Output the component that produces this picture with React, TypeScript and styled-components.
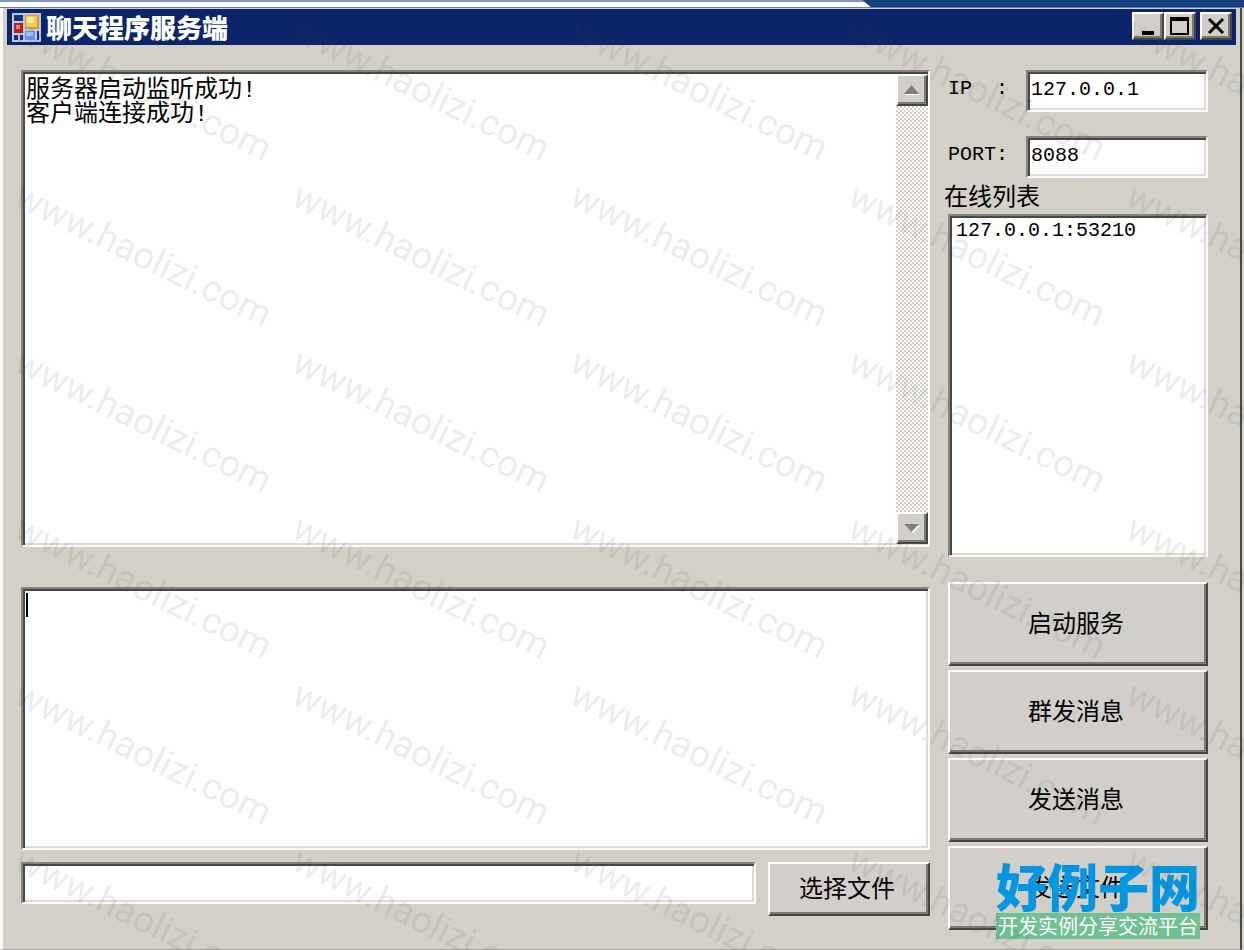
import React from "react";
import styled, { createGlobalStyle, css } from "styled-components";

const face = "#d4d0c8";
const songti = `"Liberation Mono", "Noto Sans CJK SC", monospace`;

const GlobalStyle = createGlobalStyle`
  * { box-sizing: border-box; }
  body { margin: 0; background: ${face}; }
  button, input, textarea { font: inherit; color: inherit; border-radius: 0; outline: none; }
`;

const sunken = css`
  border: 2px solid;
  border-color: #858481 #fbfaf7 #fbfaf7 #858481;
  box-shadow: inset 2px 2px 0 #454748, inset -2px -2px 0 #dedbd3;
  background: #fff;
`;

const raised = css`
  border: 2px solid;
  border-color: #fdfdfc #454545 #454545 #fdfdfc;
  box-shadow: inset -2px -2px 0 #7c7a77;
  background: #d2cfca;
`;

const Desktop = styled.div`
  position: relative;
  min-height: 100vh;
  overflow: hidden;
  display: flex;
  flex-direction: column;
  font: 24px/24px ${songti};
  color: #000;
`;

const BackStrip = styled.div`
  display: flex;
  height: 8px;
  background: #14407f;
  border-bottom: 1px solid #5f7fa8;
`;

const BackTab = styled.div`
  width: 70%;
  border-top: 2px solid #8297ae;
  background: #fbfaf6;
  clip-path: polygon(0 0, 99% 0, 100% 100%, 0 100%);
`;

const Frame = styled.main`
  flex: 1;
  display: flex;
  flex-direction: column;
  margin-right: 2px;
  padding: 1px 4px 0;
  border-left: 3px solid #fbfaf6;
  border-right: 2px solid #45484c;
  border-bottom: 1px solid #a5a29d;
  background: ${face};
`;

const TitleBar = styled.header`
  display: flex;
  align-items: center;
  height: 36px;
  padding: 0 4px 0 5px;
  background: #0c246a;
  color: #fff;
`;

const Title = styled.h1`
  flex: 1;
  margin: 0 0 0 5px;
  font: 900 26px/36px "Noto Sans CJK SC", sans-serif;
`;

const WindowButtons = styled.div`
  display: flex;
  align-self: flex-start;
  padding-top: 3px;
`;

const WindowButton = styled.button<{ $apart?: boolean }>`
  ${raised}
  display: grid;
  place-items: center;
  width: 32px;
  height: 28px;
  padding: 0;
  margin-left: ${(p) => (p.$apart ? 4 : 0)}px;
`;

const Content = styled.form`
  flex: 1;
  display: grid;
  grid-template-columns: minmax(0, 1fr) 260px;
  column-gap: 18px;
  padding: 25px 28px 18px 14px;
`;

const Column = styled.div`
  display: flex;
  flex-direction: column;
`;

const LogBox = styled.div`
  ${sunken}
  display: flex;
  height: 477px;
  margin-bottom: 40px;
  padding: 2px 0 1px 2px;
`;

const LogText = styled.textarea`
  flex: 1;
  min-width: 0;
  resize: none;
  border: 0;
  padding: 5px 1px;
  background: transparent;
  overflow: hidden;
`;

const ScrollBar = styled.div`
  display: flex;
  flex-direction: column;
  justify-content: space-between;
  width: 32px;
  background: repeating-conic-gradient(#fff 0 25%, #d4d0c8 0 50%) 0 0 / 4px 4px;
`;

const ScrollButton = styled.button`
  ${raised}
  display: grid;
  place-items: center;
  width: 32px;
  height: 32px;
  padding: 0;
`;

const MessageBox = styled.textarea`
  ${sunken}
  height: 263px;
  resize: none;
  padding: 4px;
  margin-bottom: 12px;
  caret-color: transparent;
  background: linear-gradient(#000, #000) 3px 4px / 2px 24px no-repeat #fff;
`;

const FileRow = styled.div`
  display: flex;
  align-items: flex-start;
  gap: 12px;
`;

const TextField = styled.input`
  ${sunken}
  flex: 1;
  min-width: 0;
  height: 42px;
  padding: 0 3px 4px;
  font-size: 20px;
`;

const PushButton = styled.button<{ $compact?: boolean }>`
  ${raised}
  width: ${(p) => (p.$compact ? "162px" : "100%")};
  height: ${(p) => (p.$compact ? 54 : 84)}px;
  padding: 4px 4px 0 0;
`;

const Field = styled.label`
  display: flex;
  margin-bottom: 24px;
  font-size: 20px;
  line-height: 38px;
`;

const FieldName = styled.span`
  width: 78px;
  white-space: pre;
`;

const ListLabel = styled.label`
  margin: -15px 0 3px -4px;
`;

const OnlineList = styled.select`
  ${sunken}
  width: 100%;
  height: 343px;
  margin-bottom: 25px;
  padding: 3px 6px;
  border-radius: 0;
  overflow: hidden;
  font: 20px/24px ${songti};
  color: #000;
  outline: none;
  option { padding: 0; min-height: 24px; }
`;

const Actions = styled.div`
  display: grid;
  gap: 4px;
`;

const WatermarkLayer = styled.div`
  position: absolute;
  inset: 0;
  overflow: hidden;
  pointer-events: none;
  display: grid;
  grid-template-columns: repeat(5, 278px);
  grid-auto-rows: 166px;
  padding: 12px 0 0 17px;
`;

const Watermark = styled.span`
  font: 400 37px/32px Roboto, sans-serif;
  white-space: nowrap;
  color: rgba(60, 60, 60, 0.1);
  transform: rotate(26deg);
  transform-origin: 0 16px;
`;

const SiteBadge = styled.div`
  position: absolute;
  right: 44px;
  bottom: 11px;
  display: flex;
  flex-direction: column;
  align-items: center;
`;

const SiteName = styled.strong`
  font: 900 51px/56px "Noto Sans CJK SC", sans-serif;
  color: #0596e2;
`;

const SiteSlogan = styled.span`
  padding: 0 2px;
  background: #6fc092;
  color: #fff;
  font: 20px/26px "Noto Sans CJK SC", sans-serif;
`;

const AppIcon = () => (
  <svg width="29" height="29" viewBox="0 0 29 29" aria-hidden="true">
    <rect width="29" height="29" fill="#b9c8e6" />
    <rect x="2" y="2" width="9" height="6" fill="#17337a" />
    <rect x="2" y="10" width="9" height="10" fill="#b32418" />
    <rect x="4" y="12" width="4" height="4" fill="#e88372" />
    <rect x="13" y="2" width="14" height="14" fill="#d99f22" />
    <rect x="14" y="3" width="11" height="11" fill="#f3c94f" />
    <rect x="15" y="4" width="7" height="6" fill="#fbe9a4" />
    <rect x="2" y="22" width="4" height="5" fill="#17337a" />
    <rect x="8" y="22" width="3" height="5" fill="#17337a" />
    <rect x="13" y="18" width="10" height="9" fill="#5f9be8" />
    <rect x="14" y="19" width="7" height="4" fill="#a5cbfa" />
    <rect x="25" y="18" width="2" height="9" fill="#17337a" />
  </svg>
);

const Arrow = ({ down }: { down?: boolean }) => (
  <svg width="18" height="12" viewBox="0 0 18 12" aria-hidden="true">
    <path d={down ? "M3 4h14l-7 7z" : "M2 10h15v1H3z"} fill="#fff" />
    <path d={down ? "M1 2h15L8.500 10z" : "M1 10h15L8.500 1z"} fill="#808080" />
  </svg>
);

const marks = Array.from({ length: 30 }, (_, i) => i);

export default function App() {
  return (
    <Desktop>
      <GlobalStyle />
      <BackStrip><BackTab /></BackStrip>
      <Frame>
        <TitleBar>
          <AppIcon />
          <Title>聊天程序服务端</Title>
          <WindowButtons>
            <WindowButton aria-label="最小化">
              <svg width="24" height="22"><path d="M6 16h12v4H6z" /></svg>
            </WindowButton>
            <WindowButton aria-label="最大化">
              <svg width="24" height="22"><path d="M2 2h19v18H2zM4 6v12h15V6z" fillRule="evenodd" /></svg>
            </WindowButton>
            <WindowButton $apart aria-label="关闭">
              <svg width="24" height="22"><path d="M5 4l14 14M19 4L5 18" stroke="#000" strokeWidth="3" /></svg>
            </WindowButton>
          </WindowButtons>
        </TitleBar>
        <Content onSubmit={(e) => e.preventDefault()}>
          <Column>
            <LogBox>
              <LogText aria-label="日志" readOnly defaultValue={"服务器启动监听成功!\n客户端连接成功!"} />
              <ScrollBar>
                <ScrollButton type="button" aria-label="向上"><Arrow /></ScrollButton>
                <ScrollButton type="button" aria-label="向下"><Arrow down /></ScrollButton>
              </ScrollBar>
            </LogBox>
            <MessageBox aria-label="消息" />
            <FileRow>
              <TextField aria-label="文件" />
              <PushButton type="button" $compact>选择文件</PushButton>
            </FileRow>
          </Column>
          <Column>
            <Field><FieldName>{"IP  :"}</FieldName><TextField defaultValue="127.0.0.1" /></Field>
            <Field><FieldName>PORT:</FieldName><TextField defaultValue="8088" /></Field>
            <ListLabel htmlFor="online">在线列表</ListLabel>
            <OnlineList id="online" size={10}><option>127.0.0.1:53210</option></OnlineList>
            <Actions>
              <PushButton type="button">启动服务</PushButton>
              <PushButton type="button">群发消息</PushButton>
              <PushButton type="button">发送消息</PushButton>
              <PushButton type="button">发送文件</PushButton>
            </Actions>
          </Column>
        </Content>
      </Frame>
      <SiteBadge>
        <SiteName>好例子网</SiteName>
        <SiteSlogan>开发实例分享交流平台</SiteSlogan>
      </SiteBadge>
      <WatermarkLayer aria-hidden="true">
        {marks.map((i) => <Watermark key={i}>www.haolizi.com</Watermark>)}
      </WatermarkLayer>
    </Desktop>
  );
}
